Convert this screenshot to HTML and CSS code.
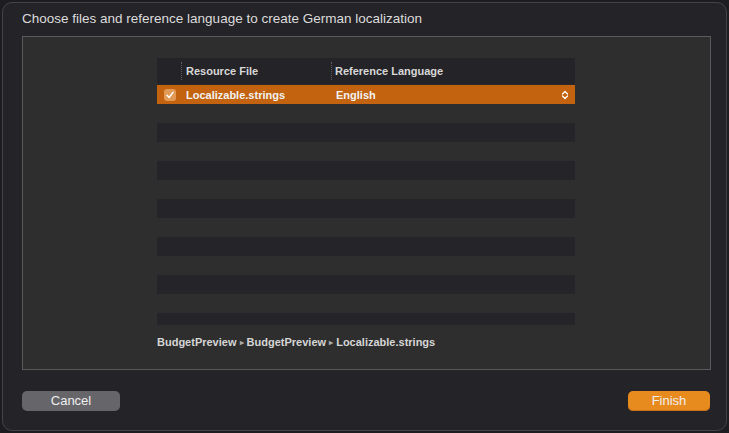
FILE: index.html
```html
<!DOCTYPE html>
<html>
<head>
<meta charset="utf-8">
<link rel="stylesheet" href="styles.css">
</head>
<body>
<div class="sheet">
  <div class="title">Choose files and reference language to create German localization</div>
  <div class="panel">
    <div class="table">
      <div class="thead">
        <div class="th th-check"></div>
        <div class="th th-file">Resource File</div>
        <div class="th th-lang">Reference Language</div>
      </div>
      <div class="row selected">
        <div class="cell cell-check">
          <span class="checkbox">
            <svg width="12" height="12" viewBox="0 0 12 12"><path d="M3 6.3 L5.1 8.5 L9 3.4" fill="none" stroke="#fff" stroke-width="1.5" stroke-linecap="round" stroke-linejoin="round"/></svg>
          </span>
        </div>
        <div class="cell cell-file">Localizable.strings</div>
        <div class="cell cell-lang">
          <span>English</span>
          <svg class="updown" width="8" height="10" viewBox="0 0 8 10"><path d="M1.5 4 L4 1.5 L6.5 4 M1.5 6 L4 8.5 L6.5 6" fill="none" stroke="#fff" stroke-width="1.3" stroke-linecap="round" stroke-linejoin="round"/></svg>
        </div>
      </div>
      <div class="row"></div>
      <div class="row alt"></div>
      <div class="row"></div>
      <div class="row alt"></div>
      <div class="row"></div>
      <div class="row alt"></div>
      <div class="row"></div>
      <div class="row alt"></div>
      <div class="row"></div>
      <div class="row alt"></div>
      <div class="row"></div>
      <div class="row alt short"></div>
    </div>
    <div class="path">BudgetPreview <span class="sep">▸</span> BudgetPreview <span class="sep">▸</span> Localizable.strings</div>
  </div>
  <div class="buttons">
    <button class="btn btn-cancel">Cancel</button>
    <button class="btn btn-finish">Finish</button>
  </div>
</div>
</body>
</html>
```

FILE: styles.css
```css
html, body {
  margin: 0;
  padding: 0;
  background: #1d1c1f;
  font-family: "Liberation Sans", Arial, sans-serif;
}

.sheet {
  margin: 2px;
  width: 725px;
  height: 429px;
  box-sizing: border-box;
  border: 1px solid #444347;
  border-radius: 10px;
  background: #242327;
  padding: 0 15px 0 19px;
  display: flex;
  flex-direction: column;
}

.title {
  margin-top: 8px;
  height: 16px;
  line-height: 16px;
  font-size: 13.5px;
  color: #dcdcdc;
  white-space: nowrap;
}

.panel {
  margin-top: 9px;
  height: 334px;
  box-sizing: border-box;
  border: 1px solid #5a5a5c;
  background: #2e2e2e;
  padding: 21px 0 0 134px;
}

.table {
  width: 418px;
  display: flex;
  flex-direction: column;
}

.thead {
  height: 26px;
  background: #242327;
  display: flex;
  align-items: center;
  border-bottom: 1px solid #2a2a2c;
}

.th {
  font-size: 11px;
  font-weight: bold;
  color: #d8d8d8;
  height: 18px;
  line-height: 18px;
  box-sizing: border-box;
}

.th-check {
  width: 25px;
  border-right: 1px dotted #5d5d60;
}

.th-file {
  width: 150px;
  padding-left: 4px;
  border-right: 1px dotted #5d5d60;
}

.th-lang {
  padding-left: 3px;
  flex: 1;
}

.row {
  height: 19px;
  display: flex;
  align-items: center;
}

.row.alt {
  background: #252428;
}

.row.short {
  height: 12px;
}

.row.selected {
  background: #c4630f;
}

.cell {
  font-size: 11px;
  font-weight: bold;
  color: #f2f2f2;
  box-sizing: border-box;
}

.cell-check {
  width: 25px;
  padding-left: 7px;
  display: flex;
  align-items: center;
}

.checkbox {
  width: 12px;
  height: 12px;
  border-radius: 3px;
  background: #e39a55;
  display: block;
}

.checkbox svg {
  display: block;
}

.cell-file {
  width: 150px;
  padding-left: 4px;
}

.cell-lang {
  flex: 1;
  padding-left: 4px;
  padding-right: 6px;
  display: flex;
  align-items: center;
  justify-content: space-between;
}

.updown {
  display: block;
}

.path {
  margin-top: 10px;
  margin-left: 0;
  font-size: 11px;
  font-weight: bold;
  color: #d6d6d6;
  height: 14px;
  line-height: 14px;
  white-space: nowrap;
}

.sep {
  font-size: 8px;
  color: #aaa;
  vertical-align: 1px;
}

.buttons {
  margin-top: 21px;
  display: flex;
  justify-content: space-between;
  padding-right: 1px;
}

.btn {
  height: 20px;
  border: none;
  border-radius: 5px;
  font-family: "Liberation Sans", Arial, sans-serif;
  font-size: 13px;
  color: #efefef;
  padding: 0;
  line-height: 20px;
}

.btn-cancel {
  width: 98px;
  background: #66656a;
}

.btn-finish {
  width: 82px;
  background: #e88b1f;
  box-shadow: inset 0 -1px 0 #c8701a;
}
```
